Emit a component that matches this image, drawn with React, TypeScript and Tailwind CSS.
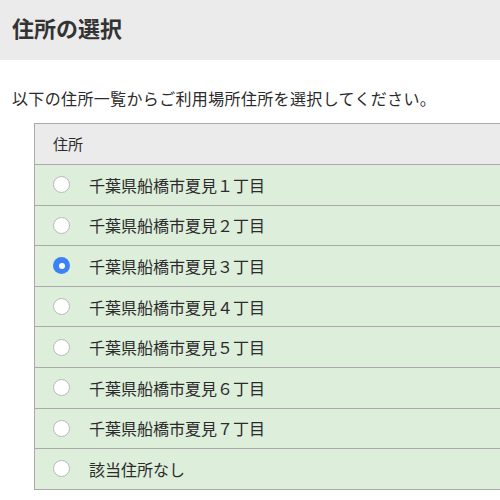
import { useState } from 'react';

const addresses = [
  '千葉県船橋市夏見１丁目',
  '千葉県船橋市夏見２丁目',
  '千葉県船橋市夏見３丁目',
  '千葉県船橋市夏見４丁目',
  '千葉県船橋市夏見５丁目',
  '千葉県船橋市夏見６丁目',
  '千葉県船橋市夏見７丁目',
  '該当住所なし',
];

const Radio = ({ checked }: { checked: boolean }) =>
  checked ? (
    <span className="w-[17px] h-[17px] rounded-full bg-[#3b82f6] flex items-center justify-center shrink-0">
      <span className="w-[6px] h-[6px] rounded-full bg-white" />
    </span>
  ) : (
    <span className="w-[17px] h-[17px] rounded-full bg-white border border-[#b8b8b8] shrink-0" />
  );

export default function App() {
  const [selected, setSelected] = useState(2);

  return (
    <div
      className="w-[500px] h-[500px] overflow-hidden bg-white text-[#2b2b2b]"
      style={{ fontFamily: '"Noto Sans CJK JP", "Noto Sans", sans-serif' }}
    >
      <div className="h-[60px] bg-[#ebebeb] px-3 flex items-center">
        <h1 className="text-[22px] font-bold leading-none text-[#333] -mt-[6px]">住所の選択</h1>
      </div>

      <p className="mt-[26px] px-3 text-[16px] leading-[24px] tracking-[0.35px]">
        以下の住所一覧からご利用場所住所を選択してください。
      </p>

      <div className="mt-[13px] ml-[34px] w-[520px] border border-[#aaaaaa]">
        <div className="h-[40px] bg-[#ebebeb] flex items-center pl-[18px] text-[15px]">住所</div>
        {addresses.map((addr, i) => (
          <label
            key={addr}
            className="h-[40.6px] border-t border-[#aaaaaa] bg-[#ddeedb] flex items-center pl-[18px] cursor-pointer"
            onClick={() => setSelected(i)}
          >
            <Radio checked={selected === i} />
            <span className="ml-[19px] text-[16px] leading-none">{addr}</span>
          </label>
        ))}
      </div>
    </div>
  );
}
